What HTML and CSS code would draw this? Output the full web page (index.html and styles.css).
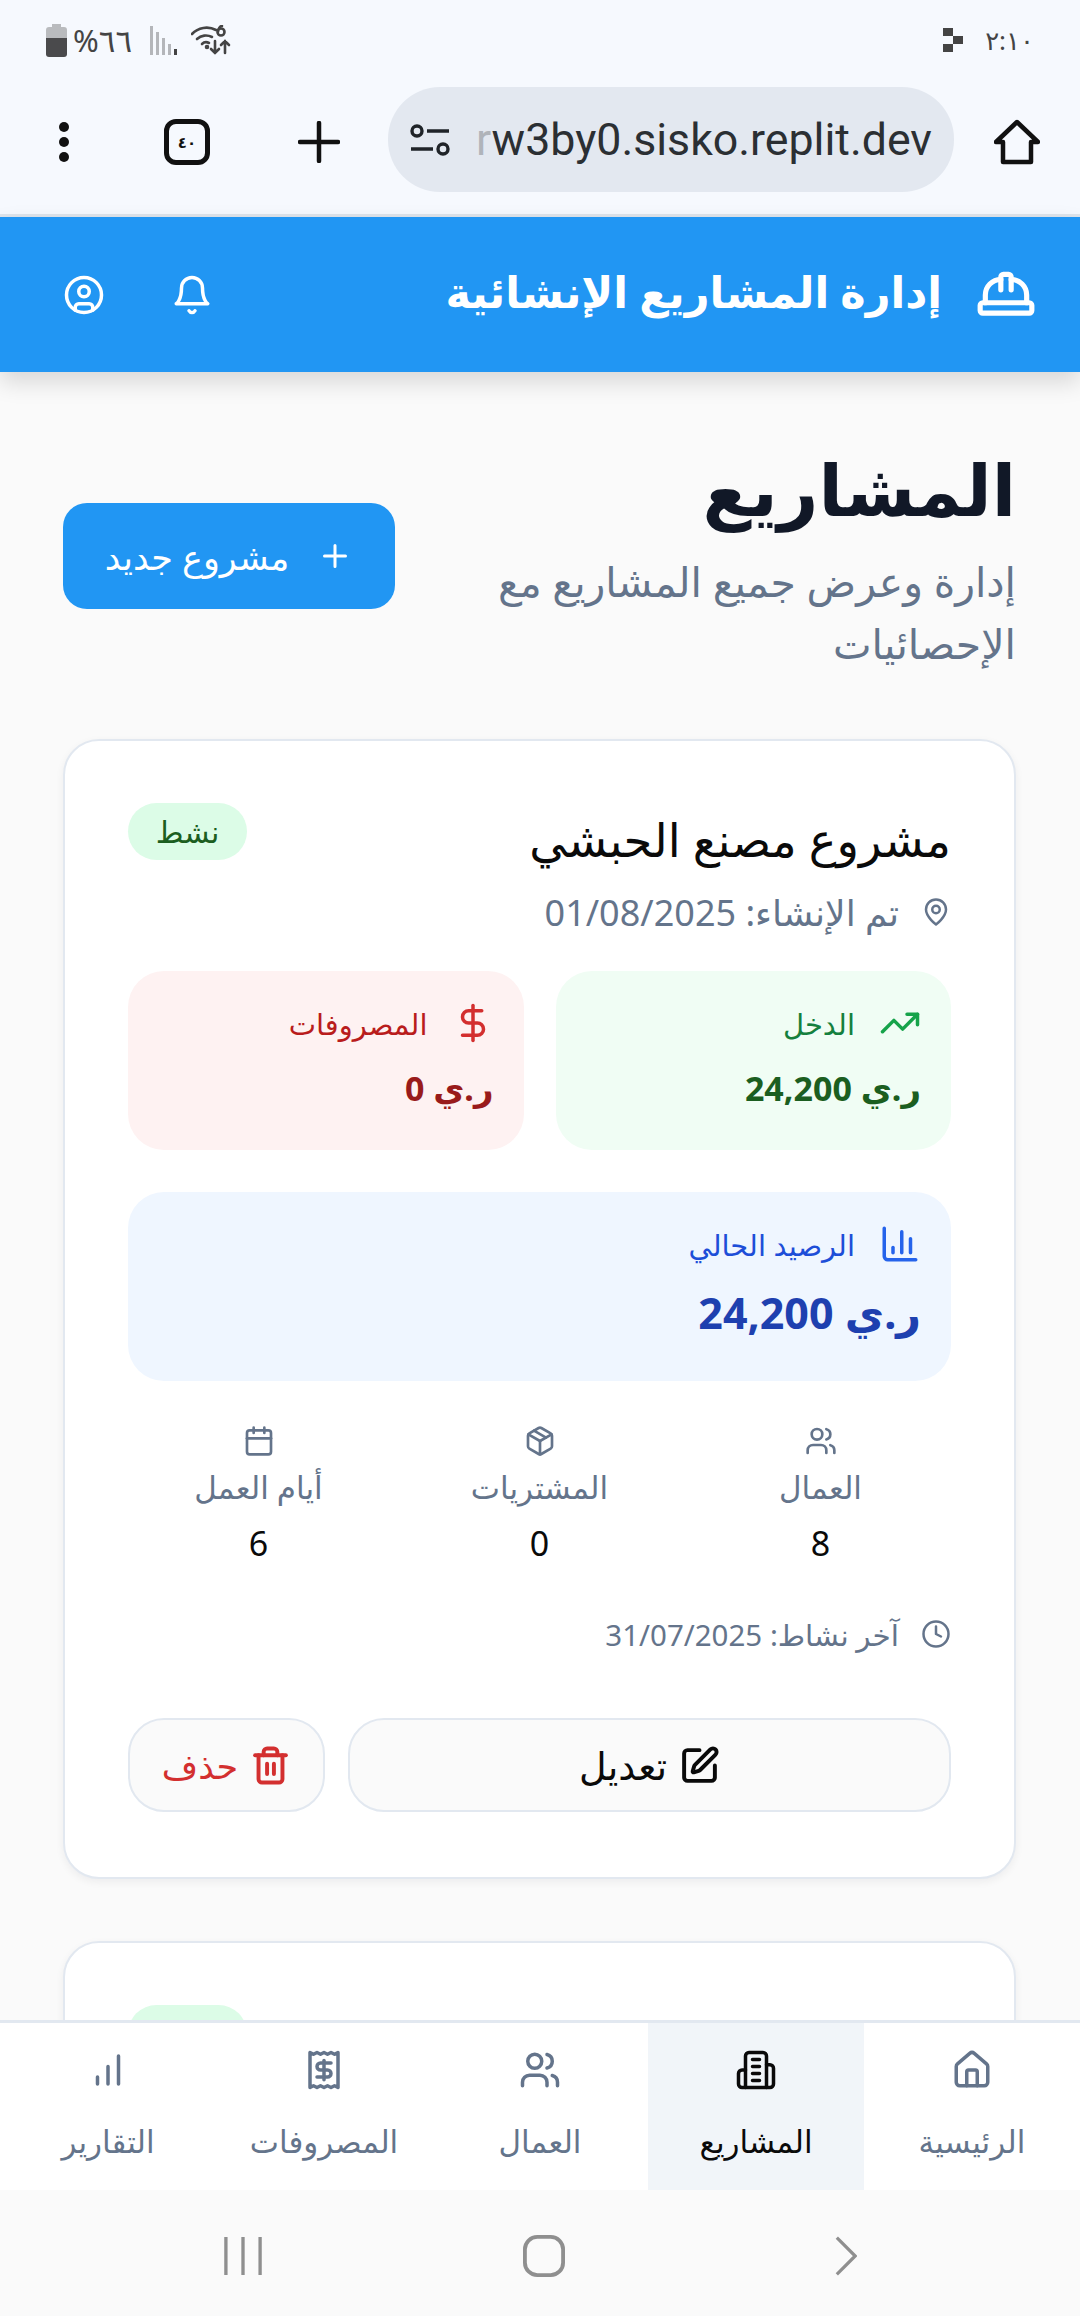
FILE: index.html
```html
<!DOCTYPE html>
<html lang="ar" dir="rtl">

<head>
  <meta charset="UTF-8">
  <meta name="viewport" content="width=device-width, initial-scale=1.0">
  <title>المشاريع</title>
  <link rel="stylesheet" href="styles.css">
</head>

<body>
  <div class="phone">
    <div class="status-bar">
      <div class="status-group">
        <span class="status-time">٢:١٠</span>
        <svg class="status-dot" viewBox="0 0 20 24" fill="#444"><rect x="0" y="0" width="10" height="8"/><rect x="10" y="8" width="10" height="8"/><rect x="0" y="16" width="10" height="8"/></svg>
      </div>
      <div class="status-group status-left">
        <svg class="status-wifi" viewBox="0 0 40 30" fill="none" stroke="#444" stroke-width="2.6" stroke-linecap="round">
          <path d="M1 9a20 20 0 0 1 24-4"/><path d="M6 14a13 13 0 0 1 15-2"/><path d="M11 19a6 6 0 0 1 7-1"/>
          <circle cx="16" cy="22" r="1" fill="#444"/><path d="M24 16v12M20 24l4 4 4-4M34 28V16M30 20l4-4 4 4"/><circle cx="30" cy="7" r="3.5"/><path d="M27 7c0-3 2-6 4-6"/>
        </svg>
        <svg class="status-signal" viewBox="0 0 28 29" fill="#b4b6ba"><rect x="0" y="0" width="3" height="29"/><rect x="6" y="6" width="3" height="23"/><rect x="12" y="12" width="3" height="17"/><rect x="18" y="18" width="3" height="11"/><rect x="24" y="23" width="3" height="6" fill="#444"/></svg>
        <span class="status-pct">%٦٦</span>
        <svg class="status-battery" viewBox="0 0 21 33"><path d="M6 0h9v3h3a3 3 0 0 1 3 3v8H0V6a3 3 0 0 1 3-3h3z" fill="#b9bbbe"/><path d="M0 14h21v16a3 3 0 0 1-3 3H3a3 3 0 0 1-3-3z" fill="#4a4a4c"/></svg>
      </div>
    </div>

    <div class="browser-bar">
      <svg class="browser-home" viewBox="0 0 46 46" fill="none" stroke="#111" stroke-width="4.5" stroke-linejoin="round"><path d="M2 23 23 3l21 20h-7v20H9V23z"/></svg>
      <div class="url-pill">
        <span class="url-text"><span class="url-fade">r</span>w3by0.sisko.replit.dev</span>
        <svg class="url-tune" viewBox="0 0 40 32" fill="none" stroke="#1f2328" stroke-width="3.4"><circle cx="7" cy="7" r="5"/><path d="M17 7h22M1 25h22"/><circle cx="33" cy="25" r="5"/></svg>
      </div>
      <svg class="browser-plus" viewBox="0 0 42 42" stroke="#111" stroke-width="4.5" stroke-linecap="round"><path d="M2 21h38M21 2v38"/></svg>
      <div class="browser-tabs">٤٠</div>
      <div class="browser-menu"><span></span><span></span><span></span></div>
    </div>

    <header class="app-header">
      <div class="brand">
        <svg class="brand-icon" viewBox="0 0 24 24"><path d="M2 18a1 1 0 0 0 1 1h18a1 1 0 0 0 1-1v-2a1 1 0 0 0-1-1H3a1 1 0 0 0-1 1v2z"/><path d="M10 10V5a1 1 0 0 1 1-1h2a1 1 0 0 1 1 1v5"/><path d="M4 15v-3a6 6 0 0 1 6-6"/><path d="M14 6a6 6 0 0 1 6 6v3"/></svg>
        <h1>إدارة المشاريع الإنشائية</h1>
      </div>
      <div class="header-actions">
        <svg viewBox="0 0 24 24"><path d="M6 8a6 6 0 0 1 12 0c0 7 3 9 3 9H3s3-2 3-9"/><path d="M10.3 21a1.94 1.94 0 0 0 3.4 0"/></svg>
        <svg viewBox="0 0 24 24"><circle cx="12" cy="12" r="10"/><circle cx="12" cy="10" r="3"/><path d="M7 20.662V19a2 2 0 0 1 2-2h6a2 2 0 0 1 2 2v1.662"/></svg>
      </div>
    </header>

    <main class="content">
      <section class="page-head">
        <div class="page-title">
          <h2>المشاريع</h2>
          <p>إدارة وعرض جميع المشاريع مع الإحصائيات</p>
        </div>
        <button class="btn-new">
          <svg viewBox="0 0 24 24"><path d="M5 12h14M12 5v14"/></svg>
          مشروع جديد
        </button>
      </section>

      <article class="card">
        <div class="card-head">
          <h3>مشروع مصنع الحبشي</h3>
          <span class="badge">نشط</span>
        </div>
        <div class="meta meta-date">
          <svg viewBox="0 0 24 24"><path d="M20 10c0 6-8 12-8 12s-8-6-8-12a8 8 0 0 1 16 0Z"/><circle cx="12" cy="10" r="3"/></svg>
          <span>تم الإنشاء: 01/08/2025</span>
        </div>

        <div class="money-grid">
          <div class="money money-in">
            <div class="money-label">
              <svg viewBox="0 0 24 24"><path d="M22 7l-8.500 8.500-5-5L2 17"/><path d="M16 7h6v6"/></svg>
              <span>الدخل</span>
            </div>
            <div class="money-value">ر.ي 24,200</div>
          </div>
          <div class="money money-out">
            <div class="money-label">
              <svg viewBox="0 0 24 24"><path d="M12 2v20"/><path d="M17 5H9.500a3.500 3.500 0 0 0 0 7h5a3.500 3.500 0 0 1 0 7H6"/></svg>
              <span>المصروفات</span>
            </div>
            <div class="money-value">ر.ي 0</div>
          </div>
        </div>

        <div class="money money-balance">
          <div class="money-label">
            <svg viewBox="0 0 24 24"><path d="M3 3v16a2 2 0 0 0 2 2h16"/><path d="M18 17V9"/><path d="M13 17V5"/><path d="M8 17v-3"/></svg>
            <span>الرصيد الحالي</span>
          </div>
          <div class="money-value">ر.ي 24,200</div>
        </div>

        <div class="stats">
          <div class="stat">
            <svg viewBox="0 0 24 24"><path d="M16 21v-2a4 4 0 0 0-4-4H6a4 4 0 0 0-4 4v2"/><circle cx="9" cy="7" r="4"/><path d="M22 21v-2a4 4 0 0 0-3-3.870"/><path d="M16 3.130a4 4 0 0 1 0 7.750"/></svg>
            <span class="stat-label">العمال</span>
            <span class="stat-num">8</span>
          </div>
          <div class="stat">
            <svg viewBox="0 0 24 24"><path d="m7.500 4.270 9 5.150"/><path d="M21 8a2 2 0 0 0-1-1.730l-7-4a2 2 0 0 0-2 0l-7 4A2 2 0 0 0 3 8v8a2 2 0 0 0 1 1.730l7 4a2 2 0 0 0 2 0l7-4A2 2 0 0 0 21 16Z"/><path d="m3.300 7 8.700 5 8.700-5"/><path d="M12 22V12"/></svg>
            <span class="stat-label">المشتريات</span>
            <span class="stat-num">0</span>
          </div>
          <div class="stat">
            <svg viewBox="0 0 24 24"><path d="M8 2v4M16 2v4"/><rect x="3" y="4" width="18" height="18" rx="2"/><path d="M3 10h18"/></svg>
            <span class="stat-label">أيام العمل</span>
            <span class="stat-num">6</span>
          </div>
        </div>

        <div class="meta meta-active">
          <svg viewBox="0 0 24 24"><circle cx="12" cy="12" r="10"/><path d="M12 6v6l4 2"/></svg>
          <span>آخر نشاط: 31/07/2025</span>
        </div>

        <div class="card-actions">
          <button class="btn-edit">
            <svg viewBox="0 0 24 24"><path d="M12 3H5a2 2 0 0 0-2 2v14a2 2 0 0 0 2 2h14a2 2 0 0 0 2-2v-7"/><path d="M18.375 2.625a1 1 0 0 1 3 3l-9.013 9.014a2 2 0 0 1-.853.505l-2.873.84a.5.5 0 0 1-.62-.62l.84-2.873a2 2 0 0 1 .506-.852z"/></svg>
            تعديل
          </button>
          <button class="btn-delete">
            <svg viewBox="0 0 24 24"><path d="M3 6h18"/><path d="M19 6v14c0 1-1 2-2 2H7c-1 0-2-1-2-2V6"/><path d="M8 6V4c0-1 1-2 2-2h4c1 0 2 1 2 2v2"/><path d="M10 11v6M14 11v6"/></svg>
            حذف
          </button>
        </div>
      </article>

      <article class="card">
        <div class="card-head">
          <h3>&nbsp;</h3>
          <span class="badge"></span>
        </div>
      </article>
    </main>

    <nav class="bottom-nav">
      <a class="nav-item">
        <svg viewBox="0 0 24 24"><path d="M15 21v-8a1 1 0 0 0-1-1h-4a1 1 0 0 0-1 1v8"/><path d="M3 10a2 2 0 0 1 .709-1.528l7-5.999a2 2 0 0 1 2.582 0l7 5.999A2 2 0 0 1 21 10v9a2 2 0 0 1-2 2H5a2 2 0 0 1-2-2z"/></svg>
        الرئيسية
      </a>
      <a class="nav-item active">
        <svg viewBox="0 0 24 24"><path d="M6 22V4a2 2 0 0 1 2-2h8a2 2 0 0 1 2 2v18Z"/><path d="M6 12H4a2 2 0 0 0-2 2v6a2 2 0 0 0 2 2h2"/><path d="M18 9h2a2 2 0 0 1 2 2v9a2 2 0 0 1-2 2h-2"/><path d="M10 6h4M10 10h4M10 14h4M10 18h4"/></svg>
        المشاريع
      </a>
      <a class="nav-item">
        <svg viewBox="0 0 24 24"><path d="M16 21v-2a4 4 0 0 0-4-4H6a4 4 0 0 0-4 4v2"/><circle cx="9" cy="7" r="4"/><path d="M22 21v-2a4 4 0 0 0-3-3.870"/><path d="M16 3.130a4 4 0 0 1 0 7.750"/></svg>
        العمال
      </a>
      <a class="nav-item">
        <svg viewBox="0 0 24 24"><path d="M4 2v20l2-1 2 1 2-1 2 1 2-1 2 1 2-1 2 1V2l-2 1-2-1-2 1-2-1-2 1-2-1-2 1Z"/><path d="M16 8h-6a2 2 0 1 0 0 4h4a2 2 0 1 1 0 4H8"/><path d="M12 17.500v-11"/></svg>
        المصروفات
      </a>
      <a class="nav-item">
        <svg viewBox="0 0 24 24"><path d="M12 20V10M18 20V4M6 20v-4"/></svg>
        التقارير
      </a>
    </nav>

    <div class="system-nav">
      <svg class="sys-back" viewBox="0 0 24 44" fill="none" stroke="#8f8f8f" stroke-width="3.500"><path d="M2 2l20 20L2 42"/></svg>
      <svg class="sys-home" viewBox="0 0 44 44" fill="none" stroke="#8f8f8f" stroke-width="4"><rect x="2" y="2" width="40" height="40" rx="13"/></svg>
      <svg class="sys-recent" viewBox="0 0 40 40" stroke="#8f8f8f" stroke-width="3.500"><path d="M2 0v40M20 0v40M38 0v40"/></svg>
    </div>
  </div>
</body>

</html>
```

FILE: styles.css
```css
* {
  box-sizing: border-box;
}

body {
  margin: 0;
  font-family: "Noto Sans", "DejaVu Sans", sans-serif;
  color: #0f172a;
}

h1, h2, h3, p {
  margin: 0;
}

.phone {
  display: flex;
  flex-direction: column;
  width: 1080px;
  height: 2316px;
  overflow: hidden;
  background: #fafafa;
}

/* phone status bar */
.status-bar {
  flex: none;
  display: flex;
  justify-content: space-between;
  align-items: center;
  height: 70px;
  padding: 10px 46px 0 46px;
  background: #f6f9fe;
  color: #444;
}

.status-group {
  display: flex;
  align-items: center;
  gap: 22px;
}

.status-left {
  gap: 6px;
}

.status-time {
  font-size: 26px;
}

.status-pct {
  direction: ltr;
  unicode-bidi: bidi-override;
  font-size: 31px;
}

.status-dot {
  width: 20px;
  height: 24px;
}

.status-wifi {
  width: 40px;
  height: 30px;
}

.status-signal {
  width: 28px;
  height: 29px;
  margin: 0 7px 0 12px;
}

.status-battery {
  width: 21px;
  height: 33px;
}

/* browser toolbar */
.browser-bar {
  flex: none;
  display: flex;
  align-items: center;
  height: 147px;
  padding: 0 40px 0 0;
  background: #f6f9fe;
  border-bottom: 3px solid #dfe5ec;
}

.browser-home {
  width: 46px;
  height: 46px;
  margin-left: 40px;
}

.url-pill {
  display: flex;
  align-items: center;
  justify-content: space-between;
  direction: ltr;
  flex-direction: row-reverse;
  width: 566px;
  height: 105px;
  margin-bottom: 5px;
  padding: 0 22px;
  border-radius: 52px;
  background: #e3e8f0;
}

.url-text {
  font-family: Roboto, sans-serif;
  font-size: 44.700px;
  color: #2b2f33;
  white-space: nowrap;
}

.url-fade {
  color: #b0b4ba;
}

.url-tune {
  width: 40px;
  height: 32px;
}

.browser-plus {
  width: 42px;
  height: 42px;
  margin: 0 48px 0 88px;
}

.browser-tabs {
  display: flex;
  align-items: center;
  justify-content: center;
  width: 46px;
  height: 46px;
  border: 5px solid #111;
  border-radius: 12px;
  font-size: 15px;
  font-weight: 700;
  color: #111;
}

.browser-menu {
  display: flex;
  flex-direction: column;
  gap: 5px;
  margin-right: 95px;
}

.browser-menu span {
  width: 10px;
  height: 10px;
  border-radius: 50%;
  background: #111;
}

/* app header */
.app-header {
  flex: none;
  position: relative;
  z-index: 2;
  display: flex;
  justify-content: space-between;
  align-items: center;
  height: 155px;
  padding: 0 43px 0 63px;
  background: #2196f3;
  box-shadow: 0 10px 22px rgba(0, 0, 0, 0.14);
  color: #fff;
}

.app-header svg {
  fill: none;
  stroke: #fff;
  stroke-width: 2;
  stroke-linecap: round;
  stroke-linejoin: round;
}

.brand {
  display: flex;
  align-items: center;
  gap: 33px;
}

.brand-icon {
  width: 62px;
  height: 62px;
}

.brand h1 {
  padding-bottom: 6px;
  font-size: 43px;
  font-weight: 700;
}

.header-actions {
  display: flex;
  align-items: center;
  gap: 66px;
}

.header-actions svg {
  width: 42px;
  height: 42px;
}

/* page content */
.content {
  flex: 1;
  min-height: 0;
  overflow: hidden;
  padding: 66px 64px 0 63px;
}

.page-head {
  display: flex;
  justify-content: space-between;
  align-items: center;
  margin-bottom: 65px;
}

.page-title {
  width: 530px;
}

.page-title h2 {
  margin-bottom: 10px;
  font-size: 71px;
  font-weight: 700;
  line-height: 102px;
  color: #111827;
}

.page-title p {
  font-size: 41px;
  line-height: 62px;
  color: #64748b;
}

.btn-new {
  display: flex;
  align-items: center;
  justify-content: center;
  gap: 28px;
  width: 332px;
  height: 106px;
  border: 0;
  border-radius: 24px;
  background: #2196f3;
  color: #fff;
  font: inherit;
  font-size: 35px;
}

.btn-new svg {
  width: 36px;
  height: 36px;
  fill: none;
  stroke: #fff;
  stroke-width: 2;
  stroke-linecap: round;
}

.card {
  margin-bottom: 62px;
  padding: 62px 63px 65px;
  border: 2px solid #e2e8f0;
  border-radius: 36px;
  background: #fff;
  box-shadow: 0 3px 8px rgba(15, 23, 42, 0.06);
}

.card svg {
  flex: none;
  fill: none;
  stroke: currentColor;
  stroke-width: 2;
  stroke-linecap: round;
  stroke-linejoin: round;
}

.card-head {
  display: flex;
  justify-content: space-between;
  align-items: flex-start;
  height: 86px;
}

.card-head h3 {
  font-size: 46.500px;
  font-weight: 400;
  line-height: 72px;
  color: #0a0a0a;
}

.badge {
  display: flex;
  align-items: center;
  justify-content: center;
  width: 119px;
  height: 57px;
  border-radius: 29px;
  background: #dcfce7;
  color: #1b5e20;
  font-size: 30px;
}

.meta {
  display: flex;
  align-items: center;
  gap: 22px;
  color: #64748b;
}

.meta-date {
  height: 52px;
  margin-bottom: 30px;
  padding-bottom: 6px;
  font-size: 36px;
}

.meta-date svg {
  width: 30px;
  height: 30px;
}

.money-grid {
  display: grid;
  grid-template-columns: 1fr 1fr;
  gap: 32px;
  margin-bottom: 42px;
}

.money {
  padding: 30px;
  border-radius: 36px;
}

.money-grid .money {
  height: 179px;
}

.money-label {
  display: flex;
  align-items: center;
  gap: 24px;
  height: 44px;
  font-size: 29px;
}

.money-label svg {
  width: 42px;
  height: 42px;
}

.money-value {
  margin-top: 13px;
  font-size: 34px;
  font-weight: 700;
  line-height: 60px;
}

.money-in {
  background: #f0fdf4;
  color: #15803d;
}

.money-in svg {
  color: #16a34a;
}

.money-in .money-value {
  color: #1b5e20;
}

.money-out {
  background: #fef2f2;
  color: #b91c1c;
}

.money-out svg {
  color: #d32f2f;
}

.money-out .money-value {
  color: #991b1b;
}

.money-balance {
  height: 189px;
  background: #eff6ff;
  color: #1d4ed8;
}

.money-balance svg {
  color: #2563eb;
}

.money-balance .money-value {
  margin-top: 17px;
  font-size: 43px;
  color: #1e40af;
}

.stats {
  display: grid;
  grid-template-columns: repeat(3, 1fr);
  gap: 20px;
  margin-top: 44px;
}

.stat {
  display: flex;
  flex-direction: column;
  align-items: center;
  color: #64748b;
}

.stat svg {
  width: 32px;
  height: 32px;
}

.stat-label {
  margin-top: 8px;
  font-size: 31px;
  line-height: 44px;
}

.stat-num {
  margin-top: 12px;
  font-size: 34px;
  line-height: 44px;
  color: #0a0a0a;
}

.meta-active {
  margin-top: 47px;
  height: 44px;
  font-size: 29.500px;
}

.meta-active svg {
  width: 30px;
  height: 30px;
}

.card-actions {
  display: flex;
  gap: 23px;
  margin-top: 62px;
}

.card-actions button {
  display: flex;
  align-items: center;
  justify-content: center;
  gap: 12px;
  height: 94px;
  border: 2px solid #e2e8f0;
  border-radius: 36px;
  background: #fafafa;
  font: inherit;
}

.card-actions svg {
  width: 41px;
  height: 41px;
  stroke-width: 2.300;
}

.card-actions .btn-edit {
  flex: 1;
  color: #0a0a0a;
  font-size: 38px;
}

.card-actions .btn-delete {
  width: 197px;
  color: #d32f2f;
  font-size: 35px;
}

/* bottom tabs */
.bottom-nav {
  flex: none;
  position: relative;
  z-index: 2;
  display: grid;
  grid-template-columns: repeat(5, 1fr);
  height: 170px;
  border-top: 3px solid #e2e8f0;
  background: #fff;
}

.nav-item {
  display: flex;
  flex-direction: column;
  align-items: center;
  gap: 29px;
  padding-top: 26px;
  font-size: 31px;
  color: #64748b;
}

.nav-item svg {
  width: 42px;
  height: 42px;
  fill: none;
  stroke: currentColor;
  stroke-width: 2;
  stroke-linecap: round;
  stroke-linejoin: round;
}

.nav-item.active {
  background: #f1f5f9;
  color: #0a0a0a;
}

/* android navigation */
.system-nav {
  flex: none;
  display: flex;
  align-items: center;
  height: 126px;
  padding-top: 6px;
  background: #fafafa;
}

.sys-back {
  width: 22px;
  height: 42px;
  margin-right: 223px;
}

.sys-home {
  width: 42px;
  height: 42px;
  margin-right: 270px;
}

.sys-recent {
  width: 38px;
  height: 40px;
  margin-right: 261px;
}
```
